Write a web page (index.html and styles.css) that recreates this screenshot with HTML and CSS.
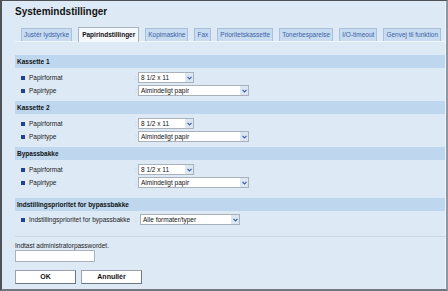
FILE: index.html
```html
<!DOCTYPE html>
<html lang="da">
<head>
    <meta charset="UTF-8">
    <title>Systemindstillinger</title>
    <link rel="stylesheet" href="styles.css">
</head>
<body>
    <div class="frame">
        <h1 class="title">Systemindstillinger</h1>

        <div class="tabs">
            <span class="tab">Justér lydstyrke</span>
            <span class="tab active">Papirindstillinger</span>
            <span class="tab">Kopimaskine</span>
            <span class="tab">Fax</span>
            <span class="tab">Prioritetskassette</span>
            <span class="tab">Tonerbesparelse</span>
            <span class="tab">I/O-timeout</span>
            <span class="tab">Genvej til funktion</span>
        </div>

        <div class="section">
            <div class="sec-head">Kassette 1</div>
            <div class="rows">
                <div class="row">
                    <span class="label"><i class="bullet"></i>Papirformat</span>
                    <span class="colon">:</span>
                    <span class="select size">8 1/2 x 11<span class="arrow"><svg width="5" height="4" viewBox="0 0 5 4"><path d="M0.5 0.8 L2.5 2.8 L4.5 0.8" fill="none" stroke="#3b5ea8" stroke-width="1.2"/></svg></span></span>
                </div>
                <div class="row">
                    <span class="label"><i class="bullet"></i>Papirtype</span>
                    <span class="colon">:</span>
                    <span class="select type">Almindeligt papir<span class="arrow"><svg width="5" height="4" viewBox="0 0 5 4"><path d="M0.5 0.8 L2.5 2.8 L4.5 0.8" fill="none" stroke="#3b5ea8" stroke-width="1.2"/></svg></span></span>
                </div>
            </div>
        </div>

        <div class="section">
            <div class="sec-head">Kassette 2</div>
            <div class="rows">
                <div class="row">
                    <span class="label"><i class="bullet"></i>Papirformat</span>
                    <span class="colon">:</span>
                    <span class="select size">8 1/2 x 11<span class="arrow"><svg width="5" height="4" viewBox="0 0 5 4"><path d="M0.5 0.8 L2.5 2.8 L4.5 0.8" fill="none" stroke="#3b5ea8" stroke-width="1.2"/></svg></span></span>
                </div>
                <div class="row">
                    <span class="label"><i class="bullet"></i>Papirtype</span>
                    <span class="colon">:</span>
                    <span class="select type">Almindeligt papir<span class="arrow"><svg width="5" height="4" viewBox="0 0 5 4"><path d="M0.5 0.8 L2.5 2.8 L4.5 0.8" fill="none" stroke="#3b5ea8" stroke-width="1.2"/></svg></span></span>
                </div>
            </div>
        </div>

        <div class="section">
            <div class="sec-head">Bypassbakke</div>
            <div class="rows last">
                <div class="row">
                    <span class="label"><i class="bullet"></i>Papirformat</span>
                    <span class="colon">:</span>
                    <span class="select size">8 1/2 x 11<span class="arrow"><svg width="5" height="4" viewBox="0 0 5 4"><path d="M0.5 0.8 L2.5 2.8 L4.5 0.8" fill="none" stroke="#3b5ea8" stroke-width="1.2"/></svg></span></span>
                </div>
                <div class="row">
                    <span class="label"><i class="bullet"></i>Papirtype</span>
                    <span class="colon">:</span>
                    <span class="select type">Almindeligt papir<span class="arrow"><svg width="5" height="4" viewBox="0 0 5 4"><path d="M0.5 0.8 L2.5 2.8 L4.5 0.8" fill="none" stroke="#3b5ea8" stroke-width="1.2"/></svg></span></span>
                </div>
            </div>
        </div>

        <div class="section">
            <div class="sec-head">Indstillingsprioritet for bypassbakke</div>
            <div class="rows prio">
                <div class="row">
                    <span class="label"><i class="bullet"></i>Indstillingsprioritet for bypassbakke</span>
                    <span class="colon">:</span>
                    <span class="select prio-sel">Alle formater/typer<span class="arrow"><svg width="5" height="4" viewBox="0 0 5 4"><path d="M0.5 0.8 L2.5 2.8 L4.5 0.8" fill="none" stroke="#3b5ea8" stroke-width="1.2"/></svg></span></span>
                </div>
            </div>
        </div>

        <div class="separator"></div>

        <div class="password">
            <div class="pw-label">Indtast administratorpasswordet.</div>
            <div class="pw-input"></div>
        </div>

        <div class="buttons">
            <span class="btn">OK</span>
            <span class="btn">Annullér</span>
        </div>
    </div>
</body>
</html>
```

FILE: styles.css
```css
* {
    margin: 0;
    padding: 0;
    box-sizing: border-box;
}

body {
    background: #dde9f5;
    font-family: 'Liberation Sans', Arial, sans-serif;
    font-size: 6.5px;
    color: #1a1a1a;
}

.frame {
    width: 448px;
    height: 291px;
    border-top: 1px solid #4e535a;
    border-left: 2px solid #4e535a;
    border-bottom: 2px solid #6f7780;
    border-right: 2px solid #8c97a3;
    box-shadow: inset -1px 0 0 #eef4fa;
    padding: 5px 1px 0 13px;
    overflow: hidden;
}

.title {
    font-size: 10px;
    line-height: 12px;
    font-weight: bold;
    color: #111;
}

.tabs {
    display: flex;
    align-items: flex-end;
    gap: 6px;
    height: 15px;
    margin-top: 9px;
    padding-left: 6px;
    border-bottom: 1px solid #f3f7fb;
}

.tab {
    height: 13px;
    line-height: 11px;
    padding: 0 2px;
    background: #c7dbf1;
    border: 1px solid #a8c0da;
    border-bottom: none;
    color: #3d5fa6;
    white-space: nowrap;
}

.tab.active {
    height: 15px;
    line-height: 13px;
    margin-bottom: -1px;
    padding: 0 3px;
    background: #f5f8fc;
    border-color: #aab3bd;
    color: #111;
    font-weight: bold;
}

.section {
    margin-top: 13px;
}

.section + .section {
    margin-top: 0;
}

.sec-head {
    height: 13px;
    line-height: 13px;
    padding-left: 2px;
    background: #bed7ee;
    font-weight: bold;
    color: #111;
}

.rows {
    padding: 3px 0 4px;
}

.rows.last {
    padding-bottom: 9px;
}

.rows.prio {
    padding: 2px 0 0;
}

.row {
    display: flex;
    align-items: center;
    height: 13px;
}

.label {
    display: flex;
    align-items: center;
    width: 120px;
    padding-left: 6px;
    color: #222;
    white-space: nowrap;
}

.bullet {
    width: 4px;
    height: 4px;
    margin-right: 4px;
    background: #23408a;
}

.colon {
    width: 3px;
    color: #b9c3cf;
}

.select {
    position: relative;
    height: 11px;
    line-height: 9px;
    padding-left: 2px;
    background: #fff;
    border: 1px solid #a9b1bb;
    color: #111;
    white-space: nowrap;
}

.select.size {
    width: 56px;
}

.select.type {
    width: 111px;
}

.select.prio-sel {
    width: 100px;
    margin-left: 2px;
}

.arrow {
    position: absolute;
    right: 0;
    top: 0;
    width: 8px;
    height: 9px;
    display: flex;
    align-items: center;
    justify-content: center;
    background: #dce7f4;
}

.separator {
    height: 1px;
    margin-top: 10px;
    margin-right: -1px;
    background: #c9d5e2;
}

.password {
    margin-top: 5px;
}

.pw-label {
    line-height: 8px;
    color: #222;
}

.pw-input {
    width: 80px;
    height: 12px;
    margin-top: 0;
    background: #fff;
    border: 1px solid #a9b1bb;
}

.buttons {
    display: flex;
    gap: 5px;
    margin-top: 8px;
}

.btn {
    width: 61px;
    height: 14px;
    line-height: 12px;
    text-align: center;
    font-weight: bold;
    font-size: 7px;
    background: #fff;
    border: 1px solid #9aa3ad;
    border-right-color: #6d7680;
    border-bottom-color: #6d7680;
    color: #111;
}
```
